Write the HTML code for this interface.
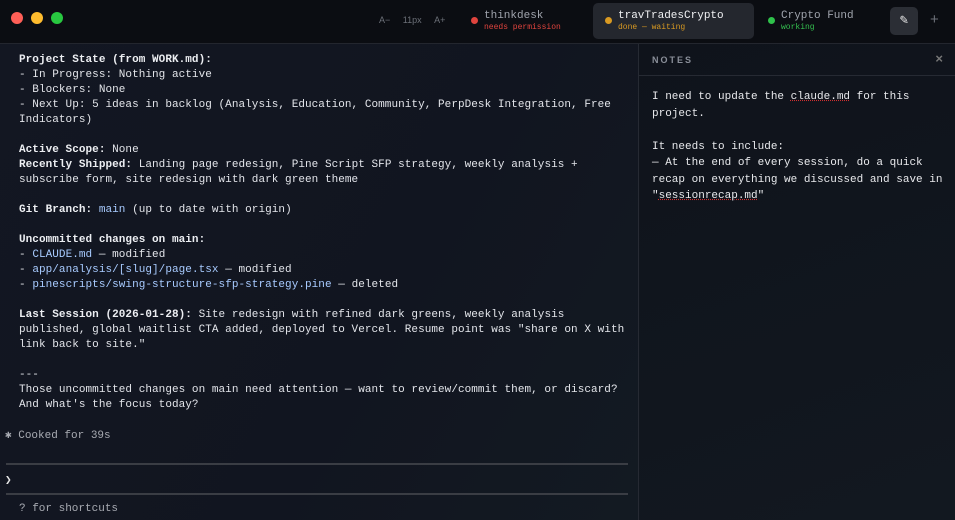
<!DOCTYPE html>
<html><head><meta charset="utf-8"><style>
*{margin:0;padding:0;box-sizing:border-box}
body{width:955px;height:520px;overflow:hidden;background:#0f1219;font-family:"Liberation Mono",monospace;color:#e2e4e8;position:relative}
.top{position:absolute;left:0;top:0;width:955px;height:44px;background:#0b0d12;border-bottom:1px solid #23262e}
.dot{position:absolute;top:12px;width:12px;height:12px;border-radius:50%}
.main{position:absolute;left:0;top:44px;width:638px;height:476px;background:linear-gradient(120deg,#131722 0%,#111520 60%,#131a22 100%)}
.term{position:absolute;left:19px;top:53px;font-size:11px;line-height:15px;white-space:pre;color:#e3e5ea;letter-spacing:0.05px}
b{font-weight:bold;color:#eceef2}
.l{color:#a8cbff}
.notes{position:absolute;left:638px;top:44px;width:317px;height:476px;background:linear-gradient(160deg,#0f131b,#121820);border-left:1px solid #262a33}
.nh{height:32px;border-bottom:1px solid #262a33;font-size:9px;letter-spacing:2px;color:#8a8f99;font-weight:bold;padding:11px 0 0 13px;font-family:"Liberation Sans",sans-serif}
.nt{position:absolute;left:13px;top:45px;font-size:11px;line-height:16.5px;white-space:pre;color:#e8e9ec}
.sp{text-decoration:underline dotted #d03030}
.tab{position:absolute;font-size:11px;line-height:13px}
.tab .s{font-size:8px;display:block;line-height:9px}
.hr{position:absolute;left:6px;width:622px;height:2px;background:#3a3d44}
</style></head><body>
<div class="top">
<div class="dot" style="left:11px;background:#fe5f57"></div>
<div class="dot" style="left:31px;background:#febc2e"></div>
<div class="dot" style="left:51px;background:#28c840"></div>
<div style="position:absolute;left:379px;top:15px;font-size:9px;color:#6c7078;font-family:'Liberation Sans',sans-serif">A−&nbsp;&nbsp;&nbsp;&nbsp;&nbsp;11px&nbsp;&nbsp;&nbsp;&nbsp;&nbsp;A+</div>
<div style="position:absolute;left:471px;top:17px;width:7px;height:7px;border-radius:50%;background:#e0443e"></div>
<div class="tab" style="left:484px;top:10px;color:#a0a4ad">thinkdesk<span class="s" style="color:#e0443e">needs permission</span></div>
<div style="position:absolute;left:593px;top:3px;width:161px;height:36px;border-radius:5px;background:#24272e"></div>
<div style="position:absolute;left:605px;top:17px;width:7px;height:7px;border-radius:50%;background:#d99a22"></div>
<div class="tab" style="left:618px;top:10px;color:#f0f1f3">travTradesCrypto<span class="s" style="color:#d99a22">done — waiting</span></div>
<div style="position:absolute;left:768px;top:17px;width:7px;height:7px;border-radius:50%;background:#2fc24b"></div>
<div class="tab" style="left:781px;top:10px;color:#a0a4ad">Crypto Fund<span class="s" style="color:#35c050">working</span></div>
<div style="position:absolute;left:890px;top:7px;width:28px;height:28px;border-radius:5px;background:#2b2e35;color:#e6e6e6;font-size:14px;text-align:center;line-height:28px">✎</div>
<div style="position:absolute;left:930px;top:11px;color:#6c7078;font-size:15px;font-family:'Liberation Sans',sans-serif">+</div>
</div>
<div class="main"></div>
<div class="term"><b>Project State (from WORK.md):</b>
- In Progress: Nothing active
- Blockers: None
- Next Up: 5 ideas in backlog (Analysis, Education, Community, PerpDesk Integration, Free
Indicators)

<b>Active Scope:</b> None
<b>Recently Shipped:</b> Landing page redesign, Pine Script SFP strategy, weekly analysis +
subscribe form, site redesign with dark green theme

<b>Git Branch:</b> <span class="l">main</span> (up to date with origin)

<b>Uncommitted changes on main:</b>
- <span class="l">CLAUDE.md</span> — modified
- <span class="l">app/analysis/[slug]/page.tsx</span> — modified
- <span class="l">pinescripts/swing-structure-sfp-strategy.pine</span> — deleted

<b>Last Session (2026-01-28):</b> Site redesign with refined dark greens, weekly analysis
published, global waitlist CTA added, deployed to Vercel. Resume point was "share on X with
link back to site."

---
Those uncommitted changes on main need attention — want to review/commit them, or discard?
And what's the focus today?</div>
<div style="position:absolute;left:5px;top:428px;font-size:11px;color:#a8abb2;white-space:pre">✱ Cooked for 39s</div>
<div class="hr" style="top:463px"></div>
<div style="position:absolute;left:5px;top:473px;font-size:11px;color:#e6e6e6">❯</div>
<div class="hr" style="top:493px"></div>
<div style="position:absolute;left:19px;top:503px;font-size:11px;color:#a8abb2">? for shortcuts</div>
<div class="notes"><div class="nh">NOTES<span style="position:absolute;right:12px;top:7px;font-size:13px;color:#777;letter-spacing:0">×</span></div>
<div class="nt">I need to update the <span class="sp">claude.md</span> for this
project.

It needs to include:
— At the end of every session, do a quick
recap on everything we discussed and save in
"<span class="sp">sessionrecap.md</span>"</div></div>
</body></html>
